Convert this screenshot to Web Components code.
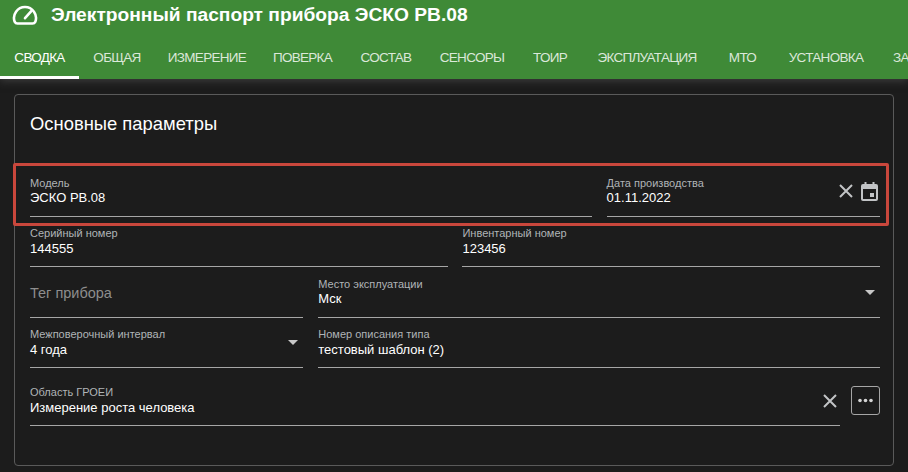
<!DOCTYPE html>
<html lang="ru">
<head>
<meta charset="utf-8">
<title>Электронный паспорт прибора</title>
<style>
  html, body { margin: 0; height: 100%; overflow: hidden; background: #1c1c1c; }
  body { font-family: "Liberation Sans", Arial, sans-serif; color: #fff; }
</style>
</head>
<body>
<passport-header title-text="Электронный паспорт прибора ЭСКО РВ.08">
  <nav-tab active width="79">Сводка</nav-tab>
  <nav-tab width="76">Общая</nav-tab>
  <nav-tab width="104">Измерение</nav-tab>
  <nav-tab width="87">Поверка</nav-tab>
  <nav-tab width="80">Состав</nav-tab>
  <nav-tab width="92">Сенсоры</nav-tab>
  <nav-tab width="64">ТОиР</nav-tab>
  <nav-tab width="130">Эксплуатация</nav-tab>
  <nav-tab width="61">МТО</nav-tab>
  <nav-tab width="106">Установка</nav-tab>
  <nav-tab width="100" start>Заметки</nav-tab>
</passport-header>

<params-card heading="Основные параметры">
  <form-field span="8" label="Модель">ЭСКО РВ.08</form-field>
  <form-field span="4" label="Дата производства">01.11.2022
    <icon-clear slot="end"></icon-clear>
    <icon-calendar slot="end"></icon-calendar>
  </form-field>
  <form-field span="6" label="Серийный номер">144555</form-field>
  <form-field span="6" label="Инвентарный номер">123456</form-field>
  <form-field span="4" placeholder="Тег прибора"></form-field>
  <form-field span="8" label="Место эксплуатации">Мск
    <icon-caret slot="end"></icon-caret>
  </form-field>
  <form-field span="4" label="Межповерочный интервал">4 года
    <icon-caret slot="end"></icon-caret>
  </form-field>
  <form-field span="8" label="Номер описания типа">тестовый шаблон (2)</form-field>
  <lookup-row label="Область ГРОЕИ">Измерение роста человека</lookup-row>
  <focus-frame></focus-frame>
</params-card>

<script>
// Small helper, every element below has the same shadow setup
function shadow(el, html) {
  el.attachShadow({ mode: 'open' }).innerHTML = html;
}

class PassportHeader extends HTMLElement {
  constructor() {
    super();
    shadow(this, `
      <style>
        :host { display: block; background: #3f8a37; height: 79px; position: relative; box-shadow: 0 2px 8px rgba(90, 90, 90, .55); }
        .title { display: flex; align-items: center; height: 29px; padding-left: 12px; gap: 13px; }
        h1 { margin: 0; font-size: 19.200px; line-height: 29px; font-weight: 700; color: #fff; white-space: nowrap; }
        svg { width: 26px; height: 20px; display: block; margin-top: 0; flex: none; }
        nav { display: flex; height: 50px; overflow: hidden; }
      </style>
      <div class="title">
        <svg viewBox="0 0 26 20" fill="none" stroke="#fff" stroke-width="2.600" stroke-linecap="round" stroke-linejoin="round">
          <path d="M5.500 18.500H20.500C22 18.500 22.800 17.800 23.400 16.600A11 11 0 1 0 2.600 16.600C3.200 17.800 4 18.500 5.500 18.500Z"/>
          <path d="M13 13.200 19.500 5.800"/>
        </svg>
        <h1></h1>
      </div>
      <nav><slot></slot></nav>
    `);
    this.shadowRoot.querySelector('h1').textContent = this.getAttribute('title-text');
  }
}

class NavTab extends HTMLElement {
  constructor() {
    super();
    shadow(this, `
      <style>
        :host { display: flex; flex: none; align-items: center; justify-content: center; box-sizing: border-box;
          height: 50px; padding: 12px 0 3px; font-size: 13.500px; letter-spacing: -.7px; color: rgba(255, 255, 255, .82);
          text-transform: uppercase; white-space: nowrap; border-bottom: 3px solid transparent; }
        :host([active]) { color: #fff; border-bottom-color: #fff; }
        :host([start]) { justify-content: flex-start; padding-left: 14px; }
      </style>
      <slot></slot>
    `);
    this.style.width = this.getAttribute('width') + 'px';
  }
}

class ParamsCard extends HTMLElement {
  constructor() {
    super();
    shadow(this, `
      <style>
        :host { display: block; box-sizing: border-box; height: 372px; margin: 15px 14px 0; padding: 0 13px 0 15px;
          background: #1c1c1c; border: 1px solid #5a5a5a; border-radius: 4px; }
        h2 { margin: 0; height: 71.600px; padding-top: 17px; box-sizing: border-box; font-size: 18.400px; line-height: 24px; font-weight: 400; color: #fff; }
        .grid { display: grid; position: relative; grid-template-columns: repeat(12, 1fr); column-gap: 14.900px; grid-auto-rows: 50.400px; }
      </style>
      <h2></h2>
      <div class="grid"><slot></slot></div>
    `);
    this.shadowRoot.querySelector('h2').textContent = this.getAttribute('heading');
  }
}

class FormField extends HTMLElement {
  constructor() {
    super();
    shadow(this, `
      <style>
        :host { display: flex; align-items: flex-end; box-sizing: border-box; min-width: 0; border-bottom: 1px solid #a6a6a6; }
        .text { flex: 1; min-width: 0; padding-bottom: 9.500px; }
        label { display: block; font-size: 11px; line-height: 13.500px; color: #b0b4b7; white-space: nowrap; }
        .value { display: block; font-size: 13px; line-height: 16px; color: #fff; white-space: nowrap; }
        .placeholder { flex: 1; font-size: 14.500px; line-height: 16px; color: #8e8e8e; padding-bottom: 5px; margin-bottom: 11px; }
        .end { display: flex; align-items: center; gap: 8px; align-self: center; }
      </style>
      <div class="text">
        <label></label>
        <span class="value"><slot></slot></span>
      </div>
      <div class="end"><slot name="end"></slot></div>
    `);
    const root = this.shadowRoot;
    const ph = this.getAttribute('placeholder');
    if (ph) {
      root.querySelector('.text').className = 'placeholder';
      root.querySelector('.placeholder').textContent = ph;
    } else {
      root.querySelector('label').textContent = this.getAttribute('label');
    }
    if (this.hasAttribute('span')) this.style.gridColumn = 'span ' + this.getAttribute('span');
  }
}

// Last row: a field with a clear cross, and the "..." button beside it
class LookupRow extends HTMLElement {
  constructor() {
    super();
    shadow(this, `
      <style>
        :host { grid-column: 1 / -1; height: 58px; display: flex; align-items: flex-start; gap: 11px; }
        form-field { flex: 1; height: 58px; }
        icon-clear { margin: 8px 3px 0 0; }
        button { flex: none; width: 29px; height: 29px; margin-top: 17.500px; padding: 0; background: none; border: 1px solid #a6a6a6; border-radius: 3px;
          display: flex; align-items: center; justify-content: center; }
        svg { width: 15px; height: 5px; display: block; }
      </style>
      <form-field>
        <span></span>
        <icon-clear slot="end"></icon-clear>
      </form-field>
      <button type="button" aria-label="Выбрать">
        <svg viewBox="0 0 15 5" fill="#d4d4d4"><circle cx="2" cy="2.500" r="1.800"/><circle cx="7.500" cy="2.500" r="1.800"/><circle cx="13" cy="2.500" r="1.800"/></svg>
      </button>
    `);
    const field = this.shadowRoot.querySelector('form-field');
    field.shadowRoot.querySelector('label').textContent = this.getAttribute('label');
    field.querySelector('span').textContent = this.textContent;
  }
}

class IconClear extends HTMLElement {
  constructor() {
    super();
    shadow(this, `
      <style>:host { display: block; width: 14px; height: 14px; } svg { display: block; width: 14px; height: 14px; }</style>
      <svg viewBox="0 0 14 14" stroke="#c2c4c6" stroke-width="2" fill="none"><path d="M1 1l12 12M13 1 1 13"/></svg>
    `);
  }
}

class IconCalendar extends HTMLElement {
  constructor() {
    super();
    shadow(this, `
      <style>:host { display: block; width: 17px; height: 19px; margin-right: 2px; } svg { display: block; width: 17px; height: 19px; }</style>
      <svg viewBox="0 0 17 19" fill="#c2c4c6"><path d="M3.500 0h2v2h6V0h2v2h1.500a2 2 0 0 1 2 2v13a2 2 0 0 1-2 2H2a2 2 0 0 1-2-2V4a2 2 0 0 1 2-2h1.500zM2 7v10h13V7z"/><path d="M9 11h4v4H9z"/></svg>
    `);
  }
}

class IconCaret extends HTMLElement {
  constructor() {
    super();
    shadow(this, `
      <style>:host { display: block; width: 10px; height: 5px; margin-right: 5px; } svg { display: block; width: 10px; height: 5px; }</style>
      <svg viewBox="0 0 10 5" fill="#c8c8c8"><path d="M0 0h10L5 5z"/></svg>
    `);
  }
}

// Red annotation drawn over the first row of the form
class FocusFrame extends HTMLElement {
  constructor() {
    super();
    shadow(this, `
      <style>
        :host { position: absolute; left: -17px; top: -3.600px; width: 876px; height: 63px; box-sizing: border-box;
          border: 3px solid #c9473c; border-radius: 2px; pointer-events: none; }
      </style>
    `);
  }
}

customElements.define('nav-tab', NavTab);
customElements.define('passport-header', PassportHeader);
customElements.define('params-card', ParamsCard);
customElements.define('form-field', FormField);
customElements.define('icon-clear', IconClear);
customElements.define('icon-calendar', IconCalendar);
customElements.define('icon-caret', IconCaret);
customElements.define('lookup-row', LookupRow);
customElements.define('focus-frame', FocusFrame);
</script>
</body>
</html>
